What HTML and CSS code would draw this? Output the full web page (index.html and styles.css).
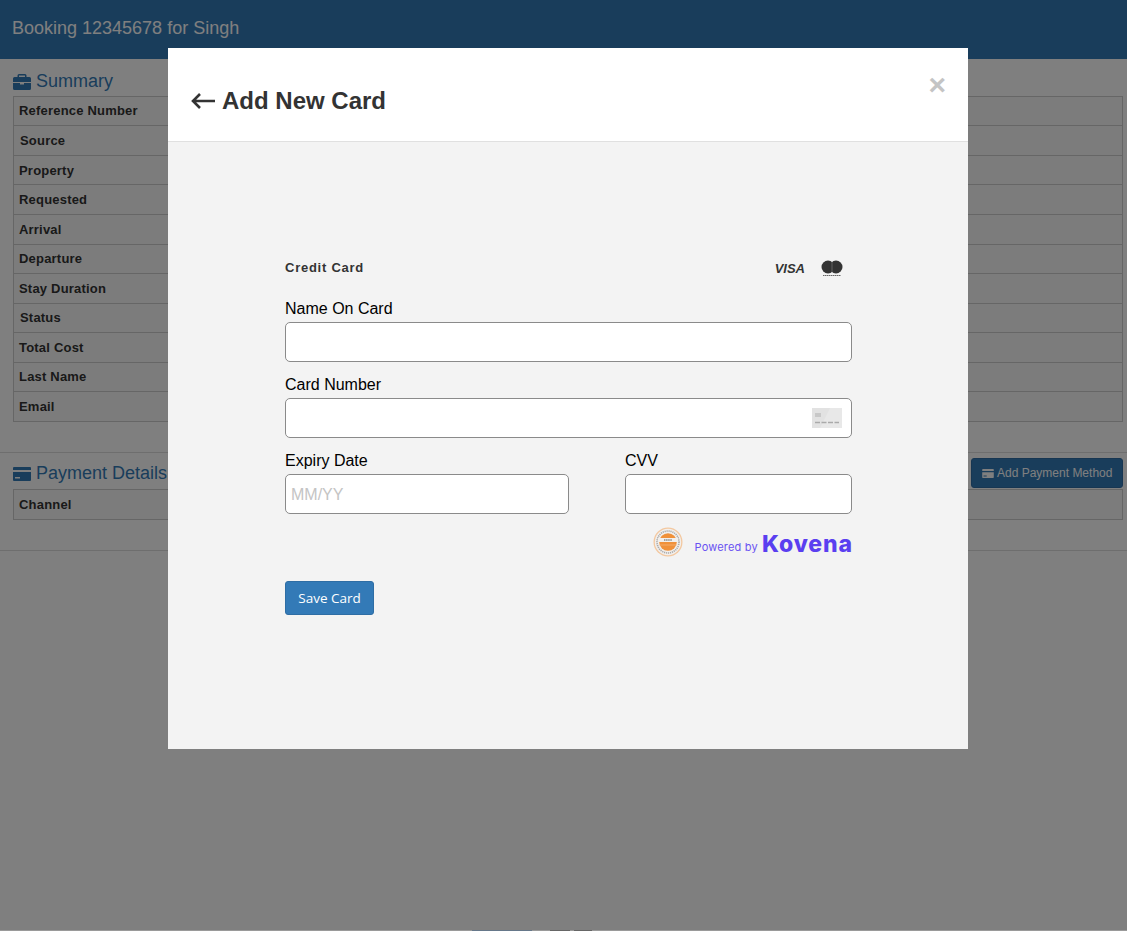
FILE: index.html
```html
<!DOCTYPE html>
<html lang="en">
<head>
    <meta charset="UTF-8">
    <meta name="viewport" content="width=device-width, initial-scale=1.0">
    <title>Booking 12345678</title>
    <link rel="stylesheet" href="styles.css">
</head>
<body>

    <div class="banner">Booking 12345678 for Singh</div>

    <div class="section">
        <h4 class="section-title">
            <svg class="title-icon" viewBox="0 0 18 16"><path d="M6 0h6a1.500 1.500 0 0 1 1.500 1.500V3H16.500A1.500 1.500 0 0 1 18 4.500V8H0V4.500A1.500 1.500 0 0 1 1.500 3H4.500V1.500A1.500 1.500 0 0 1 6 0zm0 1.500V3h6V1.500zM0 9h7v1.500h4V9h7v5.500a1.500 1.500 0 0 1-1.500 1.500h-15A1.500 1.500 0 0 1 0 14.500z"/></svg>
            Summary
        </h4>
        <div class="info-table summary-table">
            <div class="info-row">Reference Number</div>
            <div class="info-row nudge">Source</div>
            <div class="info-row">Property</div>
            <div class="info-row">Requested</div>
            <div class="info-row">Arrival</div>
            <div class="info-row">Departure</div>
            <div class="info-row">Stay Duration</div>
            <div class="info-row nudge">Status</div>
            <div class="info-row">Total Cost</div>
            <div class="info-row">Last Name</div>
            <div class="info-row">Email</div>
        </div>
    </div>

    <div class="section payment">
        <div class="section-head">
            <h4 class="section-title">
                <svg class="title-icon" viewBox="0 0 18 14"><path d="M1 0h16a1 1 0 0 1 1 1v2H0V1a1 1 0 0 1 1-1zM0 5h18v8a1 1 0 0 1-1 1H1a1 1 0 0 1-1-1zm2 5v1.500h5V10z"/></svg>
                Payment Details
            </h4>
            <button class="add-btn">
                <svg class="add-icon" viewBox="0 0 18 14"><path d="M1 0h16a1 1 0 0 1 1 1v2H0V1a1 1 0 0 1 1-1zM0 5h18v8a1 1 0 0 1-1 1H1a1 1 0 0 1-1-1zm2 5v1.500h5V10z"/></svg>
                Add Payment Method
            </button>
        </div>
        <div class="info-table">
            <div class="info-row">Channel</div>
        </div>
    </div>

    <div class="backdrop"></div>

    <div class="page-foot">
        <span class="foot-btn foot-primary"></span>
        <span class="foot-btn foot-dark"></span>
        <span class="foot-btn foot-dark small"></span>
    </div>

    <div class="modal">
        <div class="modal-header">
            <h2 class="modal-title">
                <svg class="back-arrow" viewBox="0 0 24 16"><path d="M24 8H2M9 1L2 8l7 7" fill="none" stroke="#333" stroke-width="2.600"/></svg>
                Add New Card
            </h2>
            <span class="close">&times;</span>
        </div>
        <div class="modal-body">
            <form class="card-form">
                <div class="form-top">
                    <span class="form-name">Credit Card</span>
                    <div class="brands">
                        <span class="visa">VISA</span>
                        <svg class="mc" viewBox="0 0 22 17">
                            <circle cx="7" cy="7" r="6.500" fill="#333"/>
                            <circle cx="15" cy="7" r="6.500" fill="#333"/>
                            <path d="M11 2v10" stroke="#777" stroke-width="0.700"/>
                            <path d="M2 15.500h18" stroke="#666" stroke-width="1.200" stroke-dasharray="1.500 .5"/>
                        </svg>
                    </div>
                </div>

                <label class="field-label" for="cardName">Name On Card</label>
                <input class="field" type="text" id="cardName">

                <label class="field-label" for="cardNumber">Card Number</label>
                <div class="field-wrap">
                    <input class="field" type="text" id="cardNumber">
                    <svg class="card-hint" viewBox="0 0 30 20">
                        <rect width="30" height="20" fill="#e2e2e2"/>
                        <path d="M18 0h12v20H8z" fill="#e8e8e8"/>
                        <rect x="3" y="5" width="6" height="4" fill="#c8c8c8"/>
                        <path d="M3 14.500h24" stroke="#aaa" stroke-width="1.500" stroke-dasharray="5 1.500"/>
                    </svg>
                </div>

                <div class="field-pair">
                    <div class="field-col wide">
                        <label class="field-label" for="expiry">Expiry Date</label>
                        <input class="field" type="text" id="expiry" placeholder="MM/YY">
                    </div>
                    <div class="field-col">
                        <label class="field-label" for="cvv">CVV</label>
                        <input class="field" type="text" id="cvv">
                    </div>
                </div>

                <div class="powered">
                    <svg class="pci" viewBox="0 0 30 30">
                        <circle cx="15" cy="15" r="14.500" fill="#f3c8a0"/>
                        <circle cx="15" cy="15" r="13.200" fill="#f2efec"/>
                        <circle cx="15" cy="15" r="11" fill="none" stroke="#aaa" stroke-width="1.600" stroke-dasharray="1.200 .8"/>
                        <circle cx="15" cy="15" r="8.800" fill="#f0913a"/>
                        <rect x="5" y="11" width="20" height="4" fill="#f2efec"/>
                        <path d="M11 13h8" stroke="#888" stroke-width="1.400" stroke-dasharray="1.500 .6"/>
                        <path d="M6.500 18h17" stroke="#f6b377" stroke-width="0.800"/>
                    </svg>
                    <span class="powered-by">Powered by</span>
                    <span class="kovena">Kovena</span>
                </div>

                <button type="button" class="save-btn">Save Card</button>
            </form>
        </div>
    </div>

</body>
</html>
```

FILE: styles.css
```css
html, body {
    height: 100%;
}
body {
    margin: 0;
    overflow: hidden;
    font-family: "Liberation Sans", Arial, sans-serif;
    font-size: 14px;
    color: #333;
    background: #fff;
}
.banner {
    height: 59px;
    padding-left: 12px;
    line-height: 57px;
    font-size: 18px;
    color: #fff;
    background: #337ab7;
}
.section {
    padding: 9px 4px 30px 13px;
    border-bottom: 1px solid #ddd;
}
.section-title {
    display: flex;
    align-items: center;
    gap: 5px;
    margin: 0;
    height: 27px;
    padding-bottom: 1px;
    font-size: 18px;
    font-weight: normal;
    color: #337ab7;
}
.title-icon {
    width: 18px;
    height: 16px;
    fill: #337ab7;
}
.info-table {
    border: 1px solid #ccc;
    border-bottom: none;
}
.summary-table {
    margin: -0.2px 0 0.2px;
}
.info-row {
    box-sizing: border-box;
    height: 29.550px;
    padding: 0.6px 0 0 5px;
    line-height: 27px;
    font-size: 13px;
    letter-spacing: 0.2px;
    font-weight: bold;
    border-bottom: 1px solid #ccc;
    background: #f9f9f9;
}
.info-row.nudge {
    padding-left: 6px;
}
.payment {
    padding-top: 5px;
}
.section-head {
    display: flex;
    justify-content: space-between;
    height: 31px;
}
.section-head .section-title {
    padding: 2px 0 0;
}
.add-btn {
    display: flex;
    align-items: center;
    gap: 3px;
    width: 152px;
    height: 30px;
    padding: 0 0 0 10px;
    font-family: inherit;
    font-size: 12px;
    color: #fff;
    background: #337ab7;
    border: 1px solid #2e6da4;
    border-radius: 3px;
}
.add-icon {
    width: 12px;
    height: 9px;
    fill: #fff;
}
.backdrop {
    position: fixed;
    top: 0;
    right: 0;
    bottom: 0;
    left: 0;
    background: rgba(0, 0, 0, 0.5);
}
.page-foot {
    position: fixed;
    right: 0;
    bottom: 0;
    left: 0;
    display: flex;
    gap: 4px;
    height: 1px;
    padding-left: 472px;
    background: #9a9a9a;
}
.foot-btn {
    height: 1px;
}
.foot-primary {
    width: 60px;
    margin-right: 14px;
    background: #66788a;
}
.foot-dark {
    width: 20px;
    background: #666;
}
.foot-dark.small {
    width: 18px;
}
.modal {
    position: fixed;
    top: 48px;
    left: 168px;
    display: flex;
    flex-direction: column;
    width: 800px;
    height: 701px;
}
.modal-header {
    position: relative;
    box-sizing: border-box;
    height: 94px;
    padding: 36px 0 0 23px;
    background: #fff;
    border-bottom: 1px solid #e0e0e0;
}
.modal-title {
    display: flex;
    align-items: center;
    gap: 7px;
    margin: 0;
    height: 33px;
    font-size: 24px;
    font-weight: bold;
    color: #333;
}
.back-arrow {
    width: 24px;
    height: 16px;
}
.close {
    position: absolute;
    top: 19px;
    right: 22px;
    font-size: 30px;
    line-height: 36px;
    font-weight: bold;
    color: #c4c4c4;
}
.modal-body {
    flex: 1;
    padding: 115px 116px 0 117px;
    background: #f3f3f3;
}
.form-top {
    display: flex;
    justify-content: space-between;
    align-items: center;
    height: 20px;
    margin-bottom: 22px;
}
.form-name {
    font-size: 13px;
    font-weight: bold;
    letter-spacing: 0.75px;
    color: #333;
}
.brands {
    display: flex;
    align-items: center;
    gap: 16px;
    padding: 2px 9px 0 0;
}
.visa {
    font-size: 13px;
    font-weight: bold;
    font-style: italic;
    color: #333;
}
.mc {
    width: 22px;
    height: 17px;
}
.field-label {
    display: block;
    height: 22px;
    margin-bottom: 1px;
    font-size: 16px;
    line-height: 20px;
    color: #000;
}
.field {
    display: block;
    box-sizing: border-box;
    width: 100%;
    height: 40px;
    margin-bottom: 13px;
    padding: 1px 5px 0;
    font-family: inherit;
    font-size: 16px;
    background: #fff;
    border: 1px solid #8a8a8a;
    border-radius: 5px;
}
.field::placeholder {
    color: #c4c4c4;
}
.field-wrap {
    position: relative;
}
.card-hint {
    position: absolute;
    top: 10px;
    right: 10px;
    width: 30px;
    height: 20px;
}
.field-pair {
    display: flex;
    gap: 56px;
}
.field-col {
    flex: 1;
}
.field-col.wide {
    flex: 0 0 284px;
}
.powered {
    display: flex;
    justify-content: flex-end;
    align-items: center;
    height: 30px;
}
.pci {
    width: 30px;
    height: 30px;
    margin-right: 11px;
}
.powered-by {
    margin: 9px 4px 0 0;
    font-family: "Inter", sans-serif;
    font-size: 11px;
    letter-spacing: 0.2px;
    color: #6a52f2;
}
.kovena {
    margin: 3px -1px 0 0;
    font-family: "Inter", sans-serif;
    font-size: 23px;
    font-weight: 800;
    letter-spacing: 0.9px;
    color: #5a3ff0;
}
.save-btn {
    display: block;
    width: 89px;
    height: 34px;
    margin-top: 24px;
    padding: 0;
    font-family: "Open Sans", sans-serif;
    font-size: 13.500px;
    color: #fff;
    background: #337ab7;
    border: 1px solid #2e6da4;
    border-radius: 3px;
}
```
